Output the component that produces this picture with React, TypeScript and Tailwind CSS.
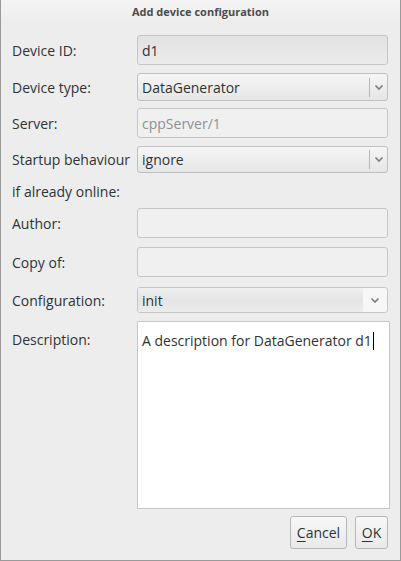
import type { ReactNode } from "react";

const font = { fontFamily: '"Open Sans", "Noto Sans", "DejaVu Sans", sans-serif' };

function Chevron() {
  return (
    <svg width="10" height="7" viewBox="0 0 10 7" className="shrink-0">
      <path d="M1.5 1.5 L5 5 L8.5 1.5" fill="none" stroke="#7a7d7e" strokeWidth="1.6" />
    </svg>
  );
}

function Row({ label, height, children, className = "" }: { label: ReactNode; height: string; children: ReactNode; className?: string }) {
  return (
    <div className={`flex items-center ${className}`}>
      <div className="w-[125px] shrink-0 text-[14px] text-[#2e3436]">{label}</div>
      <div className={`w-[251px] ${height}`}>{children}</div>
    </div>
  );
}

function Entry({ value, muted, tinted }: { value?: string; muted?: boolean; tinted?: boolean }) {
  return (
    <div
      className={`flex h-full items-center rounded-[3px] border border-[#c5c7c7] px-[4px] text-[14px] ${
        tinted ? "bg-gradient-to-b from-[#e2e2e2] to-[#ebebeb]" : "bg-[#f0f0f0]"
      } ${muted ? "text-[#8d9091]" : "text-[#2e3436]"}`}
    >
      {value}
    </div>
  );
}

function Combo({ value }: { value: string }) {
  return (
    <div className="flex h-full items-center rounded-[3px] border border-[#bfc1c1] bg-gradient-to-b from-[#f6f6f6] to-[#e6e6e6] pl-[4px] text-[14px] text-[#2e3436]">
      <span className="flex-1">{value}</span>
      <span className="h-[19px] w-px bg-[#b3b5b5]" />
      <span className="flex w-[17px] justify-center">
        <Chevron />
      </span>
    </div>
  );
}

export default function App() {
  return (
    <div className="h-[561px] w-[401px] overflow-hidden border border-t-0 border-[#9a9a9a] bg-[#ededed]" style={font}>
      <div className="flex h-[25px] items-center justify-center bg-gradient-to-b from-[#f4f4f4] to-[#ececec] text-[11px] font-bold text-[#4a4d4e]">
        Add device configuration
      </div>

      <div className="flex flex-col pl-[11px]">
        <Row label="Device ID:" height="h-[30px]" className="mt-[10px]">
          <Entry value="d1" tinted />
        </Row>
        <Row label="Device type:" height="h-[28px]" className="mt-[8px]">
          <Combo value="DataGenerator" />
        </Row>
        <Row label="Server:" height="h-[30px]" className="mt-[7px]">
          <Entry value="cppServer/1" muted />
        </Row>
        <Row label="Startup behaviour" height="h-[27px]" className="mt-[8px]">
          <Combo value="ignore" />
        </Row>
        <div className="mt-[9px] h-[20px] text-[14px] leading-[20px] text-[#2e3436]">if already online:</div>
        <Row label="Author:" height="h-[30px]" className="mt-[6px]">
          <Entry />
        </Row>
        <Row label="Copy of:" height="h-[30px]" className="mt-[9px]">
          <Entry />
        </Row>
        <Row label="Configuration:" height="h-[26px]" className="mt-[10px]">
          <div className="flex h-full items-center overflow-hidden rounded-[3px] border border-[#c5c7c7] bg-[#f7f7f7] text-[14px] text-[#2e3436]">
            <span className="flex h-full flex-1 items-center bg-gradient-to-b from-[#f0f0f0] via-[#e4e4e4] to-[#ececec] pl-[4px]">init</span>
            <span className="flex w-[24px] justify-center">
              <Chevron />
            </span>
          </div>
        </Row>
        <div className="mt-[8px] flex">
          <div className="w-[125px] shrink-0 pt-[8px] text-[14px] text-[#2e3436]">Description:</div>
          <div className="h-[188px] w-[253px] border border-[#c5c7c7] bg-white px-[4px] pt-[6px] text-[14px] text-[#2e3436]">
            A description for DataGenerator d1
            <span className="ml-px inline-block h-[18px] w-px translate-y-[4px] bg-black" />
          </div>
        </div>
        <div className="mt-[7px] flex justify-end gap-[8px] pr-[12px]">
          <button className="h-[33px] w-[57px] rounded-[3px] border border-[#b6b8b8] bg-gradient-to-b from-[#f7f7f7] to-[#e9e9e9] text-[14px] text-[#2e3436]">
            <span className="underline underline-offset-[3px]">C</span>ancel
          </button>
          <button className="h-[33px] w-[33px] rounded-[3px] border border-[#b6b8b8] bg-gradient-to-b from-[#f7f7f7] to-[#e9e9e9] text-[14px] text-[#2e3436]">
            <span className="underline underline-offset-[3px]">O</span>K
          </button>
        </div>
      </div>
    </div>
  );
}
